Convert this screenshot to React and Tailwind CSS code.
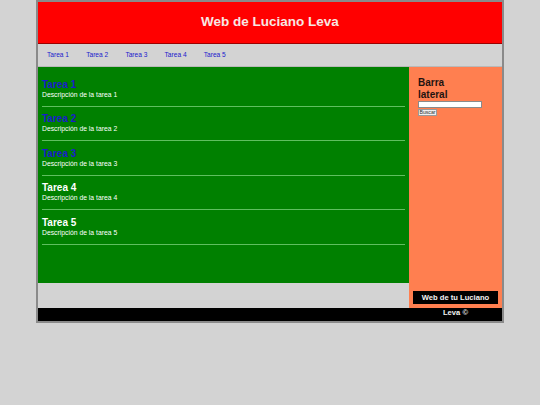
const tasks = [
  { name: "Tarea 1", visited: true },
  { name: "Tarea 2", visited: true },
  { name: "Tarea 3", visited: true },
  { name: "Tarea 4", visited: false },
  { name: "Tarea 5", visited: false },
];

const App = () => {
  return (
    <div className="min-h-[405px] bg-[#d3d3d3] font-['Liberation_Sans',Arial,sans-serif]">
      <div className="mx-auto w-[468px] border-2 border-[#8a8a8a] border-t-0">
        <header className="flex h-[44px] items-center justify-center border-t-2 border-b border-t-[#8a8a8a] border-b-[#9b0000] bg-[#ff0000]">
          <h1 className="text-[13.5px] font-bold text-[#f7e8e4]">Web de Luciano Leva</h1>
        </header>

        <nav className="flex h-[23px] items-center gap-[17.2px] border-b border-[#b9b9b9] bg-[#d3d3d3] pl-[9px]">
          {tasks.map((t) => (
            <a key={t.name} className="text-[6.6px] text-[#1a1acd]">
              {t.name}
            </a>
          ))}
        </nav>

        <div className="flex">
          <div className="flex w-[371px] flex-col">
            <main className="h-[216px] bg-[#008000] px-[4px] pt-[12px]">
              {tasks.map((t) => (
                <section key={t.name}>
                  <h2
                    className={`text-[10px] font-bold leading-[12px] ${
                      t.visited ? "text-[#1a1acd]" : "text-white"
                    }`}
                  >
                    {t.name}
                  </h2>
                  <p className="text-[6.8px] leading-[8px] text-white">Descripción de la tarea {t.name.slice(-1)}</p>
                  <hr className="mt-[7px] mb-[6.4px] border-t border-[#5fbf5f]" />
                </section>
              ))}
            </main>
          </div>

          <aside className="flex h-[241px] w-[93px] flex-col bg-[#ff7f50] pl-[9px] pt-[10px] pr-[4px] pb-[4px]">
            <h3 className="text-[10px] font-bold leading-[11.5px] text-[#1f1410]">
              Barra
              <br />
              lateral
            </h3>
            <input
              type="text"
              className="mt-[1px] h-[7px] w-[64px] border border-[#8a8a8a] bg-white"
            />
            <button className="mt-[1px] flex h-[7px] w-[19px] items-center justify-center border border-[#999] bg-[#efefef] p-0 text-[5.2px] leading-none text-[#333]">
              Buscar
            </button>
            <div className="mt-auto -ml-[5px] flex h-[13px] items-center justify-center bg-black text-[7.6px] font-bold text-[#f2f2f2]">
              Web de tu Luciano
            </div>
          </aside>
        </div>

        <footer className="flex h-[13px] bg-black">
          <div className="w-[371px]" />
          <div className="flex w-[93px] justify-center text-[7.6px] font-bold leading-[10px] text-[#f2f2f2]">
            Leva ©
          </div>
        </footer>
      </div>
    </div>
  );
};

export default App;
